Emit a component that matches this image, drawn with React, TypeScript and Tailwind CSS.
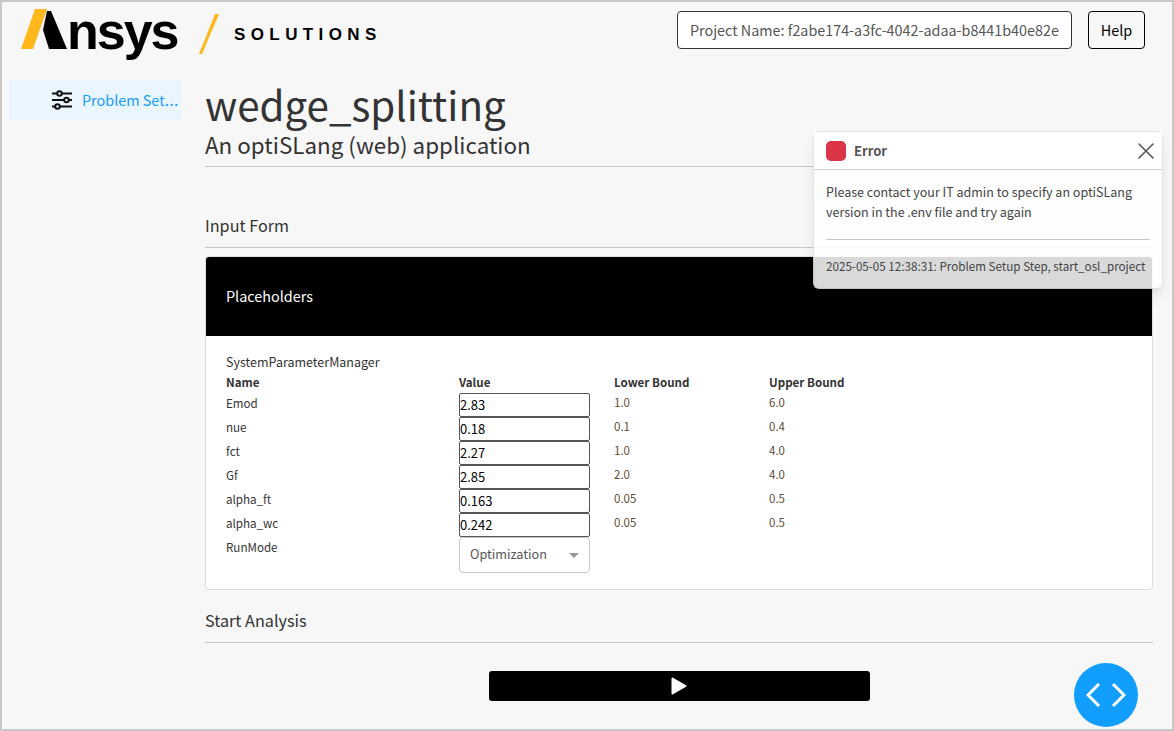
import React from "react";
import { X } from "lucide-react";

const rows = [
  ["Emod", "2.83", "1.0", "6.0"],
  ["nue", "0.18", "0.1", "0.4"],
  ["fct", "2.27", "1.0", "4.0"],
  ["Gf", "2.85", "2.0", "4.0"],
  ["alpha_ft", "0.163", "0.05", "0.5"],
  ["alpha_wc", "0.242", "0.05", "0.5"],
];

const font = { fontFamily: '"Noto Sans CJK JP", "Noto Sans", sans-serif' };
const logoFont = { fontFamily: '"Liberation Sans", sans-serif' };

export default function App() {
  return (
    <div
      style={font}
      className="relative h-[731px] w-[1174px] overflow-hidden border-2 border-[#c8c8c8] bg-[#f7f7f7] text-[#333333]"
    >
      <header className="flex h-[60px] items-start justify-between pl-[19px] pr-[27px]">
        <div className="flex items-start">
          <div className="relative h-[60px] w-[160px]">
            <svg viewBox="0 0 60 60" className="absolute left-0 top-0 h-[60px] w-[60px]">
              <polygon points="0,47 14,7 26,7 12,47" fill="#ffb71b" />
              <polygon points="26,9 30,9 46,47 28,47 22,28" fill="#000000" />
            </svg>
            <span
              style={logoFont}
              className="absolute left-[46px] top-[1px] text-[52px] font-bold leading-[56px] tracking-[-2px] text-black"
            >
              nsys
            </span>
          </div>
          <svg viewBox="0 0 24 44" className="ml-[17px] mt-[12px] h-[44px] w-[24px]">
            <polygon points="1,40 17,0 21,0 4,40" fill="#ffb71b" />
          </svg>
          <span
            style={logoFont}
            className="ml-[12px] mt-[23px] text-[17px] font-bold leading-[20px] tracking-[5.4px] text-black"
          >
            SOLUTIONS
          </span>
        </div>
        <div className="mt-[9px] flex items-center gap-4">
          <div className="flex h-[38px] w-[395px] items-center whitespace-nowrap rounded border border-[#333333] bg-white px-3 text-[14.35px] text-[#555555]">
            Project Name: f2abe174-a3fc-4042-adaa-b8441b40e82e
          </div>
          <button className="h-[38px] w-[57px] rounded border border-black text-[14.4px] text-black">Help</button>
        </div>
      </header>

      <div className="flex">
        <aside className="ml-[7px] mt-[18px] w-[172px]">
          <div className="flex h-[40px] items-center bg-[#e9f5ff] pl-[43px] text-[#1a9cff]">
            <svg viewBox="0 0 20 20" className="mt-[-1px] h-5 w-5 shrink-0" fill="none" stroke="#111111" strokeWidth="2">
              <path d="M0 3.500h5M10 3.500h10M0 10h12M17 10h3M0 16.500h3M8 16.500h12" />
              <circle cx="7.500" cy="3.500" r="2.300" />
              <circle cx="14.500" cy="10" r="2.300" />
              <circle cx="5.500" cy="16.500" r="2.300" />
            </svg>
            <span className="ml-[10px] whitespace-nowrap text-[14.4px]">
              Problem Set<span style={{ fontFamily: '"Open Sans", sans-serif' }} className="text-[18px] leading-[20px]">…</span>
            </span>
          </div>
        </aside>

        <main className="ml-[24px] w-[948px]">
          <h1 className="mt-[16px] text-[40.3px] font-normal leading-[52px]">wedge_splitting</h1>
          <h2 className="text-[22.4px] leading-[28px]">An optiSLang (web) application</h2>
          <div className="mt-[8px] border-t border-[#c8c8c8]" />

          <h3 className="mt-[45px] text-[16.2px] leading-[26px]">Input Form</h3>
          <div className="mt-[9px] border-t border-[#c8c8c8]" />

          <section className="mt-[8px] overflow-hidden rounded border border-[#dedede] bg-white">
            <div className="flex h-[79px] items-center bg-black pb-[2px] pl-[20px] text-[14.4px] text-white">Placeholders</div>
            <div className="px-[20px] pb-[16px] pt-[18px]">
              <div className="mb-[3px] text-[12.5px] leading-[16px]">SystemParameterManager</div>
              <div className="grid grid-cols-[233px_155px_155px_155px] text-[11.6px]">
                <div className="h-[20px] font-bold leading-[19px]">Name</div>
                <div className="font-bold leading-[19px]">Value</div>
                <div className="font-bold leading-[19px]">Lower Bound</div>
                <div className="font-bold leading-[19px]">Upper Bound</div>
                {rows.map((r) => (
                  <React.Fragment key={r[0]}>
                    <div className="h-[24px] leading-[20px]">{r[0]}</div>
                    <div className="h-[24px]">
                      <div className="flex h-[24px] w-[131px] items-center rounded-[2px] border border-[#555555] text-[13px] text-black">
                        {r[1]}
                      </div>
                    </div>
                    <div className="text-[11.5px] leading-[19px] text-[#5c4a33]">{r[2]}</div>
                    <div className="text-[11.5px] leading-[19px] text-[#5c4a33]">{r[3]}</div>
                  </React.Fragment>
                ))}
                <div className="leading-[20px]">RunMode</div>
                <div className="flex h-[36px] w-[131px] items-center justify-between rounded border border-[#c8c8c8] pb-[2px] pl-[10px] pr-[10px] text-[12.7px] text-[#555555]">
                  Optimization
                  <span className="mt-[2px] h-0 w-0 border-x-[5px] border-t-[5px] border-x-transparent border-t-[#999999]" />
                </div>
              </div>
            </div>
          </section>

          <h3 className="mt-[17px] text-[16.2px] leading-[26px]">Start Analysis</h3>
          <div className="mt-[9px] border-t border-[#c8c8c8]" />
          <div className="mt-[28px] flex justify-center">
            <button className="flex h-[30px] w-[381px] items-center justify-center rounded-[3px] bg-black">
              <svg viewBox="0 0 16 18" className="mt-[-1px] h-[18px] w-4" fill="white" stroke="white" strokeWidth="2" strokeLinejoin="round">
                <polygon points="1.500,1.500 14.500,9 1.500,16.500" />
              </svg>
            </button>
          </div>
        </main>
      </div>

      <div className="absolute left-[811px] top-[129px] w-[350px] rounded-md border border-black/10 bg-white/85 shadow-lg">
        <div className="flex h-[38px] items-center border-b border-[#cfcfcf] bg-white pl-[12px] pr-[2px] text-[#555555]">
          <span className="h-5 w-5 rounded-[5px] bg-[#dc3545]" />
          <span className="ml-2 text-[13px] font-bold">Error</span>
          <X size={28} strokeWidth={1.300} className="ml-auto text-[#555555]" />
        </div>
        <div className="px-[12px] pt-[12px] text-[12.5px] leading-[20px] text-[#444444]">
          Please contact your IT admin to specify an optiSLang version in the .env file and try again
          <div className="mt-[17px] border-t border-[#c8c8c8]" />
          <div className="mt-[17px] whitespace-nowrap pb-[13px] text-[11.65px] leading-[18px]">
            2025-05-05 12:38:31: Problem Setup Step, start_osl_project
          </div>
        </div>
      </div>

      <button className="absolute left-[1072px] top-[661px] flex h-16 w-16 items-center justify-center rounded-full bg-[#119eff]">
        <svg viewBox="0 0 40 24" className="h-[24px] w-[40px]" fill="none" stroke="white" strokeWidth="3">
          <path d="M13 1 2 12l11 11" />
          <path d="M27 1 38 12 27 23" />
        </svg>
      </button>
    </div>
  );
}
